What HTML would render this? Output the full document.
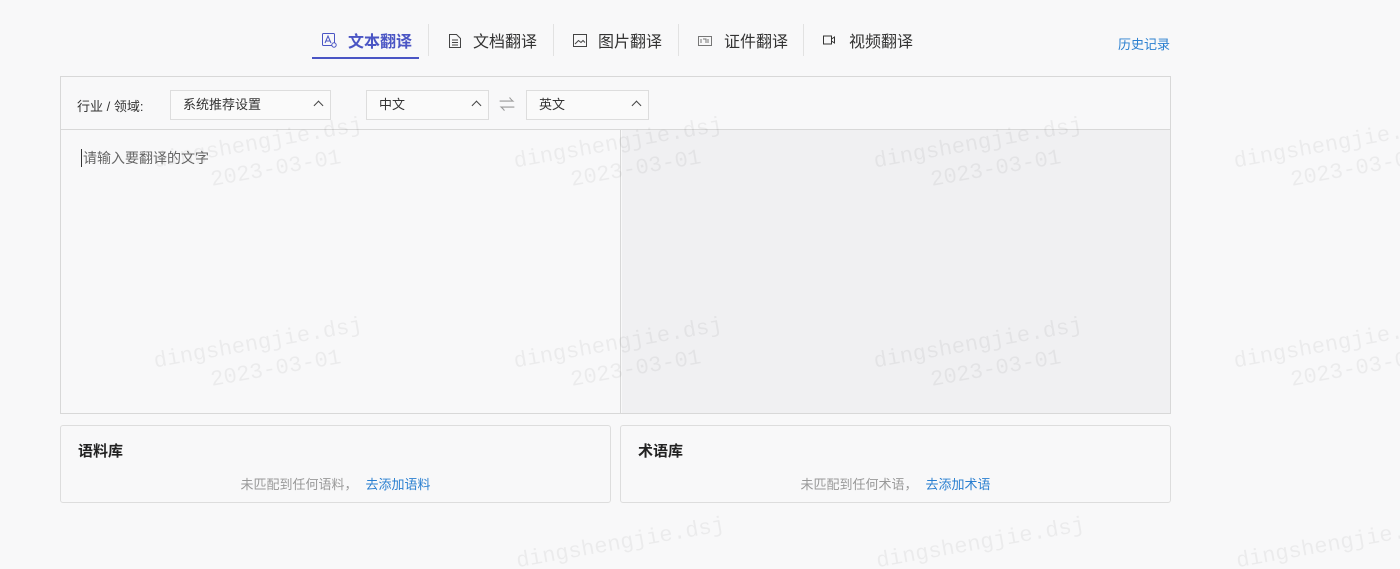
<!DOCTYPE html>
<html><head><meta charset="utf-8"><style>
*{margin:0;padding:0;box-sizing:border-box}
html,body{width:1400px;height:569px;overflow:hidden}
body{background:#f8f8f9;font-family:"Liberation Sans","Noto Sans CJK SC",sans-serif;position:relative;color:#333}
.tab{position:absolute;top:28px;display:flex;align-items:center;height:24px;font-size:15px;color:#333}
.tab svg{position:absolute}
.div{position:absolute;top:24px;width:1px;height:32px;background:#e2e2e2}
.act{color:#4a55c4;font-weight:bold}
.uline{position:absolute;left:312px;top:57px;width:107px;height:2px;background:#4a55c4}
.hist{position:absolute;left:1118px;top:34px;font-size:13px;color:#2a7fd0}
.box{position:absolute;left:60px;top:76px;width:1111px;height:338px;border:1px solid #d8d8d8}
.bar{height:53px;border-bottom:1px solid #d8d8d8;position:relative;font-size:13px}
.sel{position:absolute;top:13px;height:30px;border:1px solid #ddd;background:#fafafa;padding-left:12px;line-height:28px;font-size:13px}
.sel:after{content:"";position:absolute;right:8px;top:11px;width:6px;height:6px;border-left:1.3px solid #444;border-top:1.3px solid #444;transform:rotate(45deg)}
.left{position:absolute;left:0;top:53px;width:560px;height:283px;border-right:1px solid #d8d8d8}
.right{position:absolute;left:561px;top:53px;width:548px;height:283px;background:#f0f0f2}
.ph{position:absolute;left:20px;top:19px;font-size:14px;color:#666;border-left:1px solid #333;padding-left:1px;line-height:18px}
.card{position:absolute;top:425px;height:78px;border:1px solid #ddd;border-radius:3px;background:#f8f8f9}
.card h4{position:absolute;left:17px;top:14px;font-size:15px;color:#222}
.card p{position:absolute;top:48px;width:100%;text-align:center;font-size:13px;color:#999}
.card p a{color:#2a7fd0;margin-left:8px}
.wm{position:absolute;z-index:5;color:rgba(0,0,0,0.05);font-family:"Liberation Mono",monospace;font-size:22px;transform:rotate(-10deg);line-height:28px;text-align:center;pointer-events:none}
</style></head><body>
<div class="wm" style="left:155px;top:130px">dingshengjie.dsj<br>&nbsp;&nbsp;2023-03-01</div>
<div class="wm" style="left:515px;top:130px">dingshengjie.dsj<br>&nbsp;&nbsp;2023-03-01</div>
<div class="wm" style="left:875px;top:130px">dingshengjie.dsj<br>&nbsp;&nbsp;2023-03-01</div>
<div class="wm" style="left:1235px;top:130px">dingshengjie.dsj<br>&nbsp;&nbsp;2023-03-01</div>
<div class="wm" style="left:-205px;top:130px">dingshengjie.dsj<br>&nbsp;&nbsp;2023-03-01</div>
<div class="wm" style="left:155px;top:330px">dingshengjie.dsj<br>&nbsp;&nbsp;2023-03-01</div>
<div class="wm" style="left:515px;top:330px">dingshengjie.dsj<br>&nbsp;&nbsp;2023-03-01</div>
<div class="wm" style="left:875px;top:330px">dingshengjie.dsj<br>&nbsp;&nbsp;2023-03-01</div>
<div class="wm" style="left:1235px;top:330px">dingshengjie.dsj<br>&nbsp;&nbsp;2023-03-01</div>
<div class="wm" style="left:-205px;top:330px">dingshengjie.dsj<br>&nbsp;&nbsp;2023-03-01</div>
<div class="wm" style="left:515px;top:530px">dingshengjie.dsj</div>
<div class="wm" style="left:875px;top:530px">dingshengjie.dsj</div>
<div class="wm" style="left:1235px;top:530px">dingshengjie.dsj</div>

<svg style="position:absolute;left:321px;top:32px" width="17" height="17" viewBox="0 0 17 17" fill="none" stroke="#4a55c4" stroke-width="1"><rect x="1.5" y="1.5" width="12" height="12" rx="1"/><path d="M4 11l3-7 3 7M5 9h4"/><circle cx="13" cy="13" r="2.2" fill="#f8f8f9"/></svg>
<div class="tab act" style="left:348px;font-size:16px">文本翻译</div>
<div class="div" style="left:428px"></div>
<svg style="position:absolute;left:448px;top:33px" width="14" height="16" viewBox="0 0 14 16" fill="none" stroke="#444"><path d="M1.5 1.5h7l4 4v9h-11z M4 7h6M4 9.5h6M4 12h6"/></svg>
<div class="tab" style="left:473px;font-size:16px">文档翻译</div>
<div class="div" style="left:553px"></div>
<svg style="position:absolute;left:572px;top:33px" width="16" height="15" viewBox="0 0 16 15" fill="none" stroke="#444"><rect x="1.5" y="1.5" width="13" height="12"/><path d="M3 11l3.5-3.5 2.5 2 2-2 2 2"/></svg>
<div class="tab" style="left:598px;font-size:16px">图片翻译</div>
<div class="div" style="left:678px"></div>
<svg style="position:absolute;left:697px;top:35px" width="16" height="12" viewBox="0 0 16 12" fill="none" stroke="#777"><rect x="1.5" y="1.5" width="13" height="9"/><path d="M4 4v4M6 4h3v4M11 4v4"/></svg>
<div class="tab" style="left:724px;font-size:16px">证件翻译</div>
<div class="div" style="left:803px"></div>
<svg style="position:absolute;left:822px;top:34px" width="14" height="12" viewBox="0 0 14 12" fill="none" stroke="#333"><rect x="1.5" y="2" width="8" height="8"/><path d="M9.5 5l3-2v6l-3-2"/></svg>
<div class="tab" style="left:849px;font-size:16px">视频翻译</div>
<div class="uline"></div>
<div class="hist">历史记录</div>

<div class="box">
<div class="bar">
<span style="position:absolute;left:16px;top:19px">行业 / 领域:</span>
<div class="sel" style="left:109px;width:161px">系统推荐设置</div>
<div class="sel" style="left:305px;width:123px">中文</div>
<span style="position:absolute;left:438px;top:14px;color:#999;font-size:16px">⇌</span>
<div class="sel" style="left:465px;width:123px">英文</div>
</div>
<div class="left"><div class="ph">请输入要翻译的文字</div></div>
<div class="right"></div>
</div>

<div class="card" style="left:60px;width:551px"><h4>语料库</h4><p>未匹配到任何语料，<a>去添加语料</a></p></div>
<div class="card" style="left:620px;width:551px"><h4>术语库</h4><p>未匹配到任何术语，<a>去添加术语</a></p></div>
</body></html>
